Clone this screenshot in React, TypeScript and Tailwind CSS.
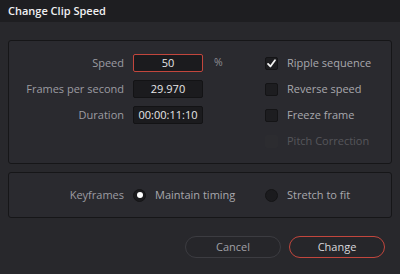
const font = { fontFamily: '"Open Sans", "Noto Sans", sans-serif' };

function Field({ value, active }: { value: string; active?: boolean }) {
	return (
		<div
			className={`flex h-[18px] w-[70px] items-center justify-center rounded-[2px] border bg-[#1b1b1e] text-[11px] text-[#e6e6e8] ${active ? "border-[#c2463d]" : "border-[#131315]"}`}
		>
			{value}
		</div>
	);
}

function Check({ label, checked, disabled }: { label: string; checked?: boolean; disabled?: boolean }) {
	return (
		<div className="flex h-[26px] items-center gap-[9px]">
			<div className={`flex size-[13px] items-center justify-center rounded-[2px] border ${disabled ? "border-[#2c2c30] bg-[#2c2c30]" : "border-[#141416] bg-[#1d1d20]"}`}>
				{checked && (
					<svg viewBox="0 0 12 12" className="size-[11px]">
						<path d="M2.2 6.4 L4.8 9.2 L9.8 2.4" fill="none" stroke="#f2f2f2" strokeWidth="2" strokeLinecap="round" strokeLinejoin="round" />
					</svg>
				)}
			</div>
			<span className={`text-[11px] ${disabled ? "text-[#56565b]" : "text-[#a8a8ad]"}`}>{label}</span>
		</div>
	);
}

function Radio({ label, checked }: { label: string; checked?: boolean }) {
	return (
		<div className="flex items-center gap-[9px]">
			<div className="flex size-[13px] items-center justify-center rounded-full border border-[#141416] bg-[#1b1b1e]">
				{checked && <div className="size-[6px] rounded-full bg-white" />}
			</div>
			<span className="text-[11px] text-[#a8a8ad]">{label}</span>
		</div>
	);
}

export default function App() {
	return (
		<div className="flex h-[274px] w-[400px] flex-col bg-[#28282c]" style={font}>
			<div className="flex h-[22px] items-center bg-[#1e1e21] px-[8px] text-[11px] font-semibold text-[#f0f0f2]">Change Clip Speed</div>
			<div className="flex flex-col px-[8px] pt-[18px]">
				<div className="flex h-[124px] rounded-[3px] border border-[#161618] bg-[#2a2a2f] pt-[9px]">
					<div className="flex w-[256px] flex-col">
						{[
							["Speed", "50", true],
							["Frames per second", "29.970", false],
							["Duration", "00:00:11:10", false],
						].map(([label, value, active], i) => (
							<div key={i} className="flex h-[26px] items-center">
								<span className="w-[115px] text-right text-[11px] text-[#9c9ca2]">{label as string}</span>
								<div className="ml-[9px]">
									<Field value={value as string} active={active as boolean} />
								</div>
								{i === 0 && <span className="ml-[11px] text-[10.5px] text-[#8f8f95]">%</span>}
							</div>
						))}
					</div>
					<div className="flex flex-col">
						<Check label="Ripple sequence" checked />
						<Check label="Reverse speed" />
						<Check label="Freeze frame" />
						<Check label="Pitch Correction" disabled />
					</div>
				</div>
				<div className="mt-[8px] flex h-[46px] items-center rounded-[3px] border border-[#161618] bg-[#2a2a2f]">
					<span className="w-[115px] text-right text-[11px] text-[#9c9ca2]">Keyframes</span>
					<div className="ml-[9px] w-[132px]">
						<Radio label="Maintain timing" checked />
					</div>
					<Radio label="Stretch to fit" />
				</div>
				<div className="mt-[18px] flex justify-end gap-[8px] pr-[7px]">
					<button className="h-[22px] w-[96px] rounded-full border border-[#3c3c41] bg-[#26262a] text-[11px] text-[#a0a0a6]">Cancel</button>
					<button className="h-[22px] w-[96px] rounded-full border border-[#c2463d] bg-[#26262a] text-[11px] text-[#d8d8dc]">Change</button>
				</div>
			</div>
		</div>
	);
}
